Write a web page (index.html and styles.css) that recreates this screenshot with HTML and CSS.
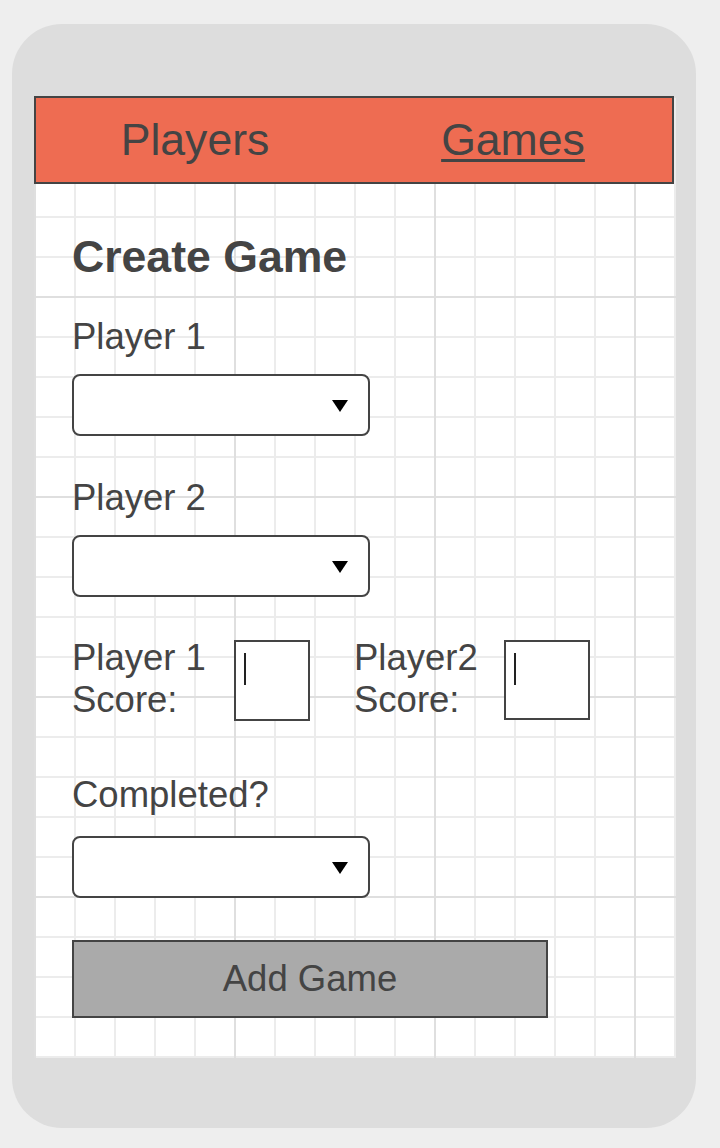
FILE: index.html
```html
<!DOCTYPE html>
<html lang="en">
<head>
<meta charset="utf-8">
<title>Create Game</title>
<link rel="stylesheet" href="styles.css">
</head>
<body>
<div class="phone">
  <div class="screen">
    <nav class="tabs">
      <div class="tab">Players</div>
      <div class="tab tab-active">Games</div>
    </nav>
    <main class="form">
      <h1 class="title">Create Game</h1>

      <div class="label label-first">Player 1</div>
      <div class="select">
        <svg class="arrow" width="16" height="12" viewBox="0 0 16 12"><polygon points="0,0 16,0 8,12" fill="#000"/></svg>
      </div>

      <div class="label">Player 2</div>
      <div class="select">
        <svg class="arrow" width="16" height="12" viewBox="0 0 16 12"><polygon points="0,0 16,0 8,12" fill="#000"/></svg>
      </div>

      <div class="score-row">
        <div class="score-label score-label-1">Player 1<br>Score:</div>
        <div class="score-box score-box-1"><span class="caret"></span></div>
        <div class="score-label score-label-2">Player2<br>Score:</div>
        <div class="score-box score-box-2"><span class="caret"></span></div>
      </div>

      <div class="label label-completed">Completed?</div>
      <div class="select select-completed">
        <svg class="arrow" width="16" height="12" viewBox="0 0 16 12"><polygon points="0,0 16,0 8,12" fill="#000"/></svg>
      </div>

      <div class="button">Add Game</div>
    </main>
  </div>
</div>
</body>
</html>
```

FILE: styles.css
```css
html, body {
  margin: 0;
  padding: 0;
}

body {
  background: #eeeeee;
  font-family: "Liberation Sans", Arial, sans-serif;
  color: #444444;
  width: 720px;
  height: 1148px;
  overflow: hidden;
}

.phone {
  box-sizing: border-box;
  margin: 24px 0 0 12px;
  width: 684px;
  height: 1104px;
  background: #dddddd;
  border-radius: 50px;
  padding: 72px 20px 70px 22px;
  display: flex;
  flex-direction: column;
}

.screen {
  flex: 1;
  background-color: #ffffff;
  background-image:
    linear-gradient(to right, #dfdfdf 2px, transparent 2px),
    linear-gradient(to bottom, #dfdfdf 2px, transparent 2px),
    linear-gradient(to right, #ececec 2px, transparent 2px),
    linear-gradient(to bottom, #ececec 2px, transparent 2px);
  background-size: 200px 200px, 200px 200px, 40px 40px, 40px 40px;
  background-position: 0 0;
}

.tabs {
  box-sizing: border-box;
  width: 640px;
  height: 88px;
  border: 2px solid #444444;
  background: #ee6c52;
  display: grid;
  grid-template-columns: 1fr 1fr;
}

.tab {
  font-size: 44.6px;
  line-height: 84px;
  text-align: center;
  color: #444444;
}

.tab-active {
  text-decoration: underline;
  text-decoration-thickness: 3px;
  text-underline-offset: 4px;
}

.form {
  padding-left: 38px;
}

.title {
  margin: 48px 0 0 0;
  font-size: 44.6px;
  line-height: 50px;
  font-weight: bold;
  color: #444444;
}

.label {
  margin-top: 41px;
  font-size: 36.5px;
  line-height: 42px;
}

.label-first {
  margin-top: 34px;
}

.label-completed {
  margin-top: 53px;
}

.select {
  box-sizing: border-box;
  margin-top: 16px;
  width: 298px;
  height: 62px;
  border: 2px solid #444444;
  border-radius: 8px;
  background: #ffffff;
  display: flex;
  justify-content: flex-end;
  align-items: center;
  padding: 2px 20px 0 0;
}

.select-completed {
  margin-top: 20px;
}

.arrow {
  display: block;
}

.score-row {
  margin-top: 40px;
  display: flex;
  align-items: flex-start;
}

.score-label {
  font-size: 36.5px;
  line-height: 42px;
}

.score-label-1 {
  width: 162px;
}

.score-label-2 {
  width: 150px;
  margin-left: 44px;
}

.score-box {
  box-sizing: border-box;
  margin-top: 3px;
  border: 2px solid #444444;
  background: #ffffff;
  padding: 11px 0 0 8px;
}

.score-box-1 {
  width: 76px;
  height: 81px;
}

.score-box-2 {
  width: 86px;
  height: 80px;
}

.caret {
  display: block;
  width: 2px;
  height: 32px;
  background: #222222;
}

.button {
  box-sizing: border-box;
  margin-top: 42px;
  width: 476px;
  height: 78px;
  border: 2px solid #444444;
  background: #aaaaaa;
  font-size: 36.5px;
  line-height: 74px;
  text-align: center;
  color: #444444;
}
```
